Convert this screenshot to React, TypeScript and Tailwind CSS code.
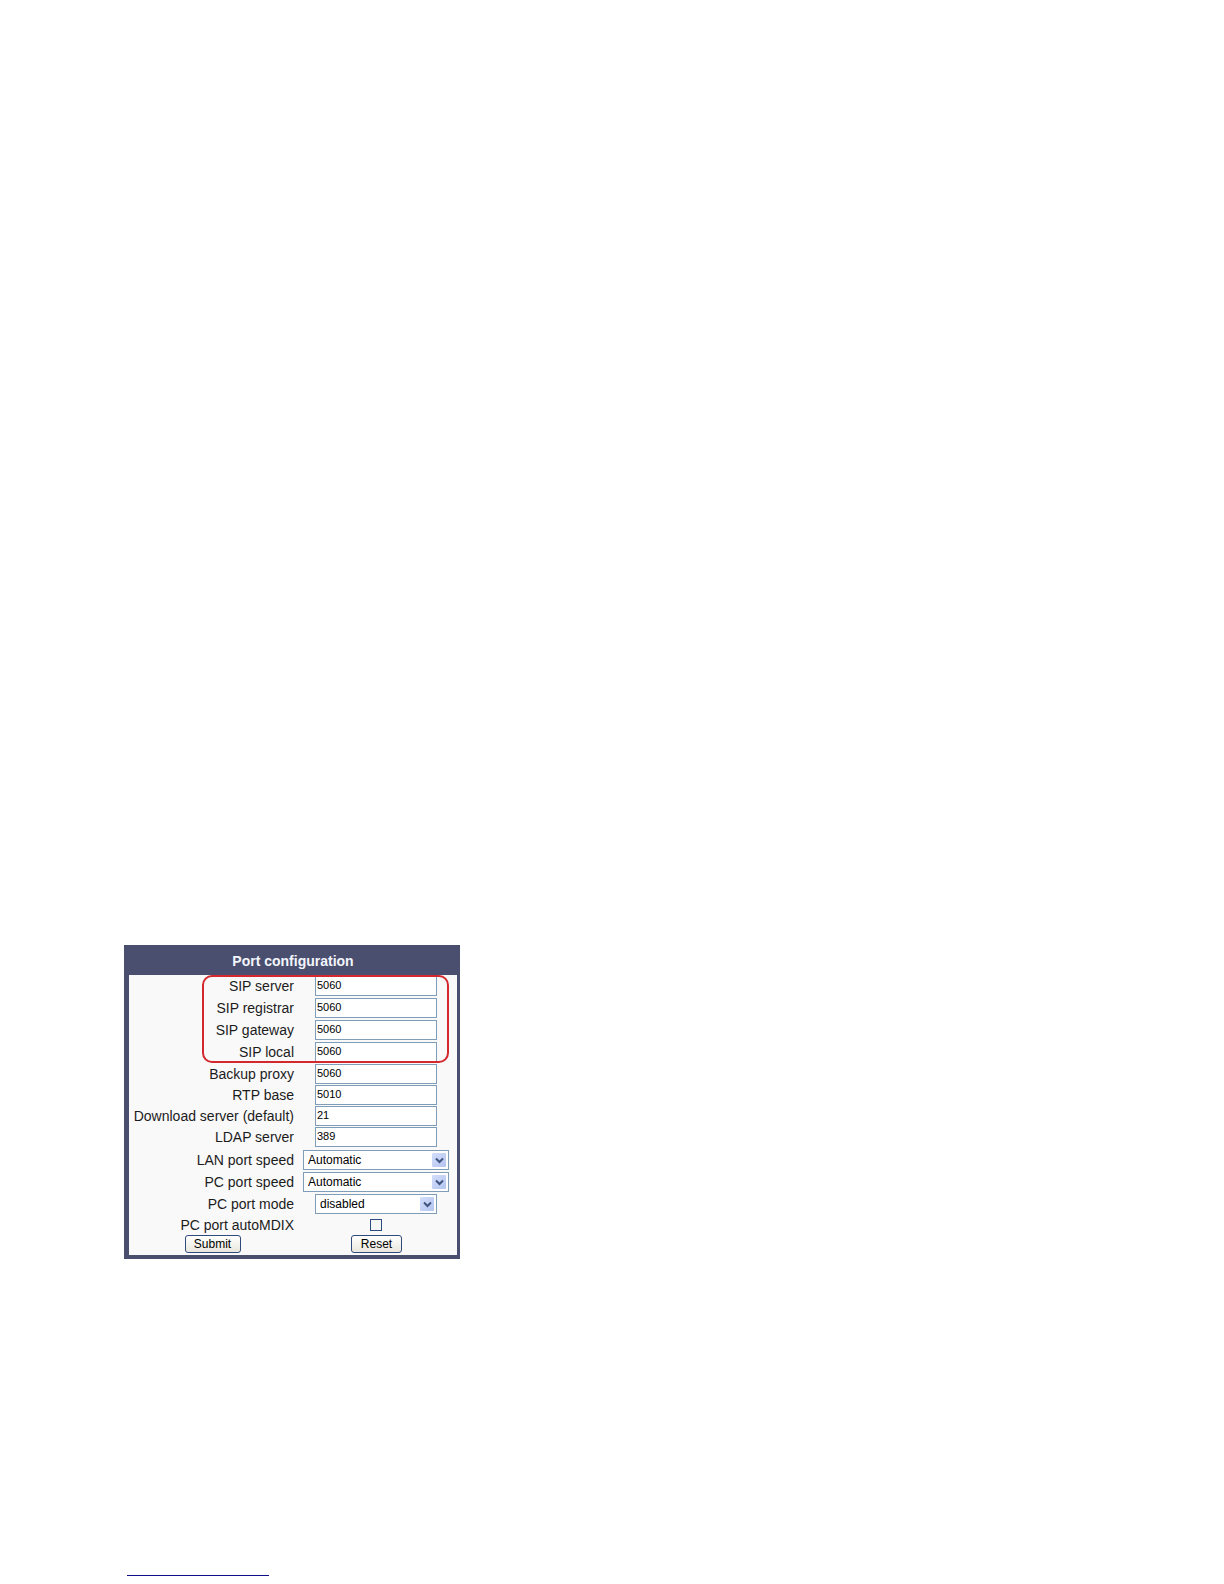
import { ReactNode } from "react";

const sipPorts = [
  { id: "sip-server", label: "SIP server", value: "5060" },
  { id: "sip-registrar", label: "SIP registrar", value: "5060" },
  { id: "sip-gateway", label: "SIP gateway", value: "5060" },
  { id: "sip-local", label: "SIP local", value: "5060" },
];

const otherPorts = [
  { id: "backup-proxy", label: "Backup proxy", value: "5060" },
  { id: "rtp-base", label: "RTP base", value: "5010" },
  { id: "download-server", label: "Download server (default)", value: "21" },
  { id: "ldap-server", label: "LDAP server", value: "389" },
];

const speeds = ["Automatic", "10 Mbps", "100 Mbps"];
const modes = ["disabled", "enabled"];

function Row({ id, label, className, children }: { id: string; label: string; className: string; children: ReactNode }) {
  return (
    <div className={`grid grid-cols-[163px_1fr] items-center gap-1 px-0.5 ${className}`}>
      <label htmlFor={id} className="text-right text-[14px] leading-5 whitespace-nowrap text-[#1c1c1c]">
        {label}
      </label>
      <div className="flex justify-center pr-px">{children}</div>
    </div>
  );
}

function PortRow({ id, label, value, height }: { id: string; label: string; value: string; height: string }) {
  return (
    <Row id={id} label={label} className={height}>
      <input
        id={id}
        type="text"
        defaultValue={value}
        className="h-5 w-[122px] border border-[#7f9db9] bg-white px-px pb-0.5 text-[11px] text-black"
      />
    </Row>
  );
}

function SelectRow({ id, label, options, width }: { id: string; label: string; options: string[]; width: string }) {
  return (
    <Row id={id} label={label} className="h-[22px]">
      <div className={`relative h-5 ${width}`}>
        <select
          id={id}
          className="block h-full w-full appearance-none border border-[#7f9db9] bg-white pl-1 text-[12px] leading-4 text-black"
        >
          {options.map((o) => (
            <option key={o}>{o}</option>
          ))}
        </select>
        <span className="pointer-events-none absolute top-[3px] right-[3px] flex size-[14px] items-center justify-center rounded-[1px] bg-linear-to-br from-[#d3defb] to-[#b4c4f0]">
          <svg width="9" height="7" viewBox="0 0 9 7" fill="none" stroke="#40547f" strokeWidth="2">
            <path d="M1 1.5 4.5 5 8 1.5" />
          </svg>
        </span>
      </div>
    </Row>
  );
}

const buttonStyle =
  "h-[18px] rounded-[3px] border border-[#2f4a7d] bg-linear-to-b from-white to-[#e9e7dd] text-[12px] leading-4 text-black";

export default function App() {
  return (
    <main className="flex min-h-screen flex-col bg-white pt-[945px] pl-[124px] font-['Liberation_Sans',Arial,sans-serif]">
      <form
        className="w-[336px] max-w-full border-r-[3px] border-b-4 border-l-[5px] border-[#4a4e6f] bg-[#f9f9f9]"
        onSubmit={(e) => e.preventDefault()}
      >
        <h1 className="bg-[#4a4e6f] pt-1.5 pb-1 text-center text-[14px] leading-5 font-bold text-[#f2f5fc]">
          Port configuration
        </h1>

        <div className="relative">
          {sipPorts.map((p) => (
            <PortRow key={p.id} {...p} height="h-[22px]" />
          ))}
          {/* highlight around the SIP ports */}
          <div className="pointer-events-none absolute inset-y-0 right-2 left-[73px] rounded-[10px] border-2 border-[#d2282e]" />
        </div>

        <div className="pb-0.5">
          {otherPorts.map((p) => (
            <PortRow key={p.id} {...p} height="h-[21px]" />
          ))}
        </div>

        <SelectRow id="lan-speed" label="LAN port speed" options={speeds} width="w-[146px]" />
        <SelectRow id="pc-speed" label="PC port speed" options={speeds} width="w-[146px]" />
        <SelectRow id="pc-mode" label="PC port mode" options={modes} width="w-[122px]" />

        <Row id="auto-mdix" label="PC port autoMDIX" className="h-[18px]">
          <input id="auto-mdix" type="checkbox" className="size-3 appearance-none border border-[#2c4c80] bg-[#f6f6f4] checked:bg-[#2c4c80]" />
        </Row>

        <div className="grid grid-cols-[163px_1fr] gap-1 px-0.5 py-0.5">
          <div className="flex justify-center">
            <button type="submit" className={`w-14 ${buttonStyle}`}>Submit</button>
          </div>
          <div className="flex justify-center">
            <button type="reset" className={`w-[51px] ${buttonStyle}`}>Reset</button>
          </div>
        </div>
      </form>

      <div className="mt-auto mb-2 ml-[3px] h-px w-[142px] bg-[#10108c]" />
    </main>
  );
}
